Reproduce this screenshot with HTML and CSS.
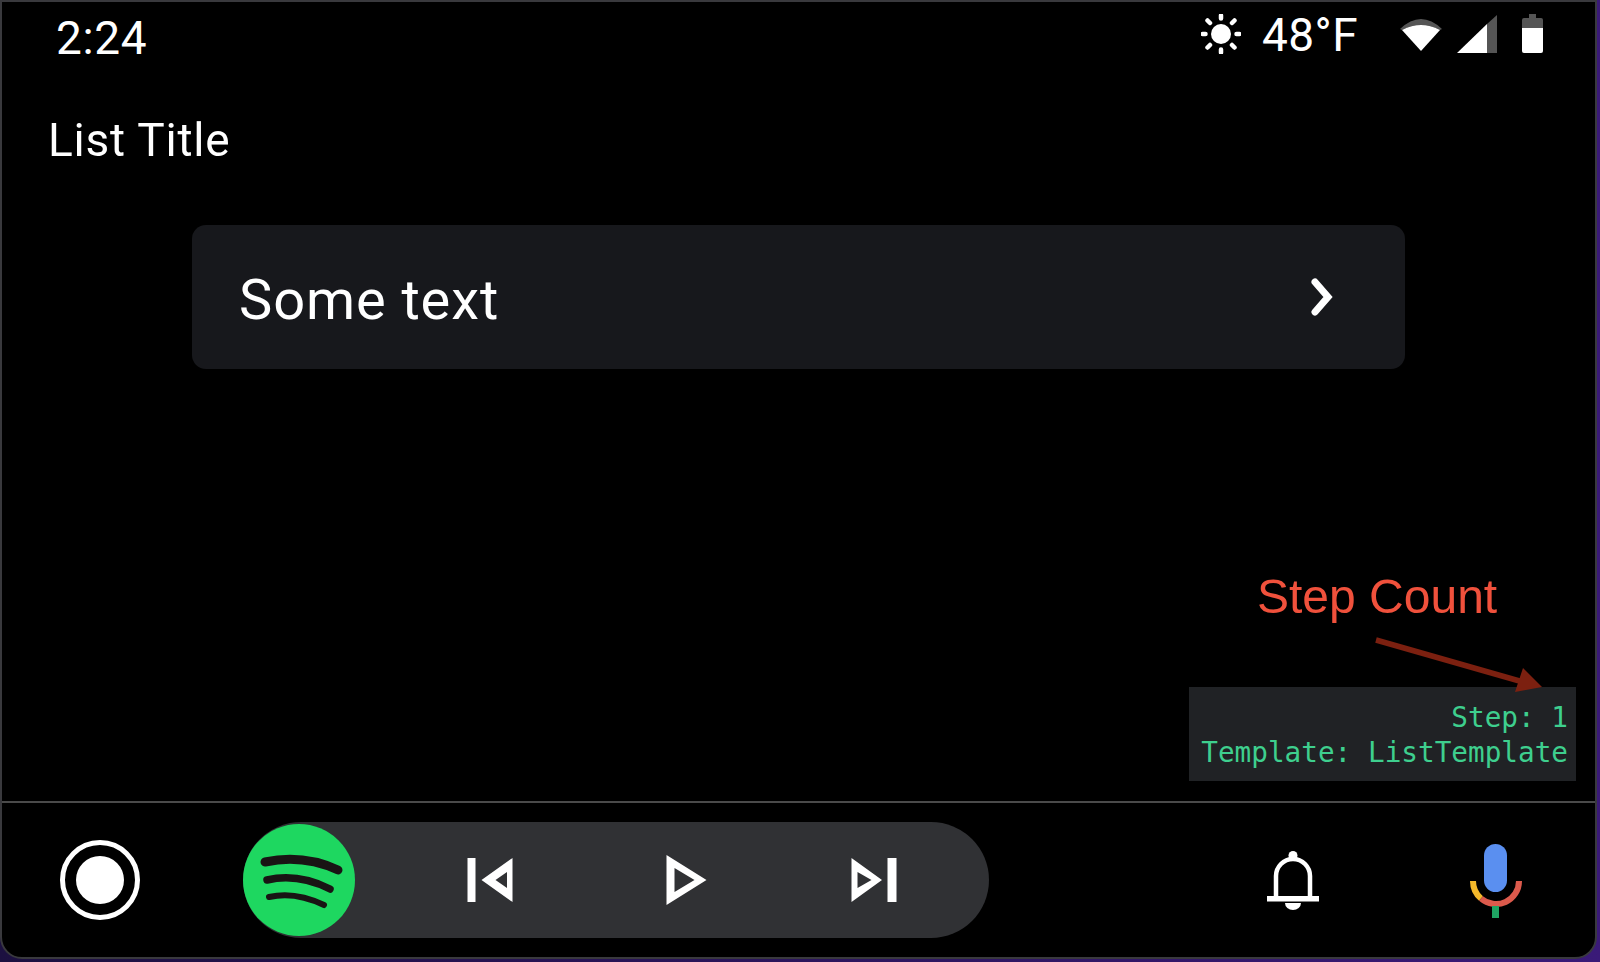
FILE: index.html
```html
<!DOCTYPE html>
<html lang="en">
<head>
<meta charset="utf-8">
<title>List Template</title>
<link rel="stylesheet" href="styles.css">
</head>
<body>
<div class="frame">
  <header class="status">
    <span class="time">2:24</span>
    <div class="status-right">
      <svg class="sun" width="40" height="40" viewBox="0 0 40 40"><circle cx="20" cy="20" r="10" fill="#fff"/><g stroke="#fff" stroke-width="4.5" stroke-linecap="round"><path d="M20 1.5v3M20 35.500v3M1.500 20h3M35.500 20h3M6.500 6.500l2.500 2.500M31 31l2.500 2.500M6.500 33.500L9 31M31 9l2.500-2.500"/></g></svg>
      <span class="temp">48°F</span>
      <svg class="wifi" width="42" height="32" viewBox="0 0 42 32"><path fill="#555" d="M0 10Q21-10 42 10L40 11Q21 1 2 11Z"/><path fill="#fff" d="M2 11Q21 1 40 11L21 32Z"/></svg>
      <svg class="signal" width="40" height="38" viewBox="0 0 40 38"><path fill="#fff" d="M0 38L30 9V38Z"/><path fill="#555" d="M30 9L40 0V38H30Z"/></svg>
      <svg class="battery" width="21" height="39" viewBox="0 0 21 39"><path fill="#555" d="M7 0h7v4h5a2 2 0 0 1 2 2v10H0V6a2 2 0 0 1 2-2h5z"/><path fill="#fff" d="M0 14h21v23a2 2 0 0 1-2 2H2a2 2 0 0 1-2-2z"/></svg>
    </div>
  </header>
  <main class="content">
    <h1 class="title">List Title</h1>
    <div class="row">
      <span class="row-text">Some text</span>
      <svg class="chevron" width="24" height="38" viewBox="0 0 24 38"><path d="M5 4L18 19L5 34" fill="none" stroke="#fff" stroke-width="7" stroke-linecap="round" stroke-linejoin="miter"/></svg>
    </div>
    <div class="debug">
      <div>Step: 1</div>
      <div>Template: ListTemplate</div>
      <span class="note">Step Count</span>
      <svg class="arrow" width="170" height="54" viewBox="0 0 170 54"><path d="M0 0L147 42" stroke="#7c2010" stroke-width="5.500" fill="none"/><path d="M166 47L147 28L139 52Z" fill="#7c2010"/></svg>
    </div>
  </main>
  <footer class="rail">
    <svg class="home" width="80" height="80" viewBox="0 0 80 80"><circle cx="40" cy="40" r="37.500" fill="none" stroke="#fff" stroke-width="5"/><circle cx="40" cy="40" r="24" fill="#fff"/></svg>
    <div class="media">
      <svg class="spotify" width="112" height="112" viewBox="0 0 112 112"><circle cx="56" cy="56" r="56" fill="#1ed760"/><g fill="none" stroke="#191414" stroke-linecap="round"><path d="M22 38Q60 30 95 46" stroke-width="9"/><path d="M24 56Q55 49 87 65" stroke-width="7.500"/><path d="M26 73Q52 67 81 81" stroke-width="6"/></g></svg>
      <div class="controls">
        <span class="control"><svg width="48" height="50" viewBox="0 0 48 50"><path fill="#fff" d="M1.500 3h8v44h-8z"/><path fill="#fff" fill-rule="evenodd" d="M46.500 3L15.500 25L46.500 47ZM41 17L29.500 25L41 33Z"/></svg></span>
        <span class="control"><svg class="play" width="48" height="52" viewBox="0 0 48 52"><path fill="#fff" fill-rule="evenodd" d="M8.500 1L48.500 26L8.500 51ZM16.500 14V38L36.500 26Z"/></svg></span>
        <span class="control"><svg width="48" height="50" viewBox="0 0 48 50"><path fill="#fff" d="M37.500 3h9v44h-9z"/><path fill="#fff" fill-rule="evenodd" d="M1.500 3L32 25L1.500 47ZM7.500 17V33L21.500 25Z"/></svg></span>
      </div>
    </div>
    <svg class="bell" width="52" height="59" viewBox="0 0 52 59"><circle cx="26" cy="4.500" r="4.500" fill="#fff"/><path d="M9 47V25a17 17 0 0 1 34 0V47" fill="none" stroke="#fff" stroke-width="4.500"/><path d="M0 45h52v5.500H0z" fill="#fff"/><path d="M18 52h16a8 7 0 0 1-16 0z" fill="#fff"/></svg>
    <svg class="mic" width="52" height="74" viewBox="0 0 52 74"><rect x="14" y="0" width="23" height="48" rx="11.500" fill="#5a8ff0"/><path d="M3 37A23 23 0 0 0 11 54.500" fill="none" stroke="#f4b92a" stroke-width="6"/><path d="M11 54.500A23 23 0 0 0 49 37" fill="none" stroke="#dc5a4c" stroke-width="6"/><rect x="22" y="62" width="7" height="12" fill="#1fa463"/></svg>
  </footer>
</div>
</body>
</html>
```
FILE: styles.css
```css
* { box-sizing: border-box; }
html, body { margin: 0; height: 100%; }
body {
  width: 1600px;
  height: 962px;
  overflow: hidden;
  background: linear-gradient(90deg, #1c1040 0%, #3a1a78 100%);
  font-family: Roboto, sans-serif;
  color: #fff;
}
.frame {
  width: 1597px;
  height: 959px;
  display: flex;
  flex-direction: column;
  background: #000;
  border: 2px solid #39393d;
  border-radius: 0 0 22px 22px;
  filter: blur(0.65px);
}
.status {
  height: 68px;
  flex: none;
  display: flex;
  align-items: center;
  justify-content: space-between;
  padding: 0 52px 0 54px;
}
.time { font-size: 46px; line-height: 1; letter-spacing: 0.6px; position: relative; top: 2px; }
.status-right { display: flex; align-items: center; }
.sun { margin-bottom: 4px; }
.temp { font-size: 46px; line-height: 1; letter-spacing: 0.4px; margin: 0 42px 2px 21px; }
.wifi { margin-bottom: 2px; }
.signal { margin: 0 0 4px 15px; }
.battery { margin: 0 0 6px 25px; }
.content {
  flex: 1;
  display: flex;
  flex-direction: column;
  min-height: 0;
}
.title {
  margin: 43px 0 0 46px;
  font-size: 46px;
  font-weight: 400;
  letter-spacing: 0.8px;
  line-height: 54px;
}
.row {
  margin: 58px 0 0 190px;
  width: 1213px;
  height: 144px;
  flex: none;
  display: flex;
  align-items: center;
  justify-content: space-between;
  padding: 0 71px 0 47px;
  background: #17181c;
  border-radius: 14px;
}
.row-text { font-size: 56px; letter-spacing: 0.9px; line-height: 1; position: relative; top: 3px; }
.debug {
  position: relative;
  margin: auto 19px 20px auto;
  width: 387px;
  height: 94px;
  padding: 13px 8px 0 0;
  background: #202225;
  color: #3ecf8e;
  font-family: "DejaVu Sans Mono", monospace;
  font-size: 27.700px;
  line-height: 35px;
  text-align: right;
}
.note {
  position: absolute;
  left: 68px;
  bottom: 157px;
  font-family: "Liberation Sans", sans-serif;
  font-size: 48px;
  line-height: 54px;
  white-space: nowrap;
  color: #f0513c;
}
.arrow { position: absolute; left: 187px; top: -47px; overflow: visible; }
.rail {
  flex: none;
  height: 156px;
  display: flex;
  align-items: center;
  padding: 0 73px 0 58px;
  border-top: 2px solid #4a4a4a;
}
.home { flex: none; }
.media {
  margin-left: 103px;
  width: 746px;
  height: 116px;
  display: flex;
  align-items: center;
  background: #303134;
  border-radius: 58px;
}
.spotify { flex: none; }
.controls { display: flex; margin-left: 39px; }
.control { width: 192px; display: flex; justify-content: center; align-items: center; }
.play { overflow: visible; }
.bell { margin-left: auto; }
.mic { margin-left: 151px; margin-top: 2px; }
```
